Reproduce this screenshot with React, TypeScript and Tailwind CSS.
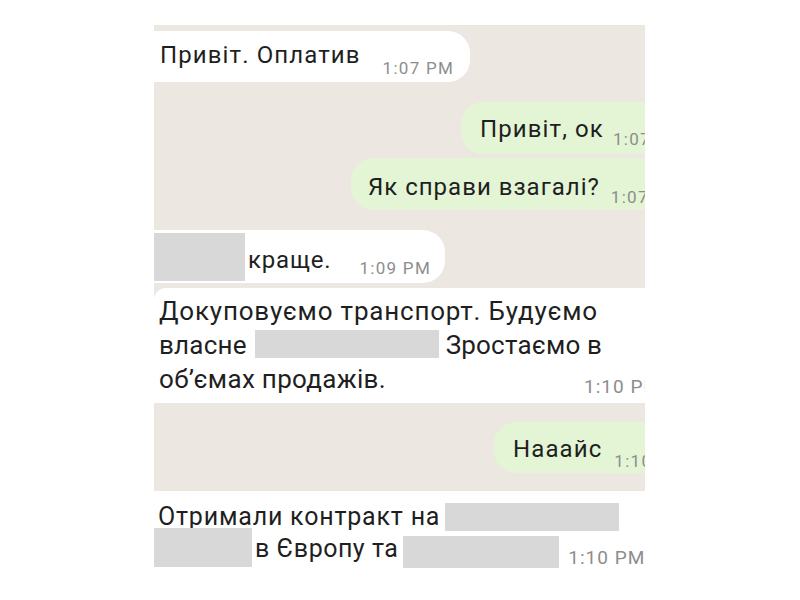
import React from "react";

function Blur({ className = "" }: { className?: string }) {
  return <div className={`shrink-0 bg-[#d8d8d8] ${className}`} />;
}

const ts = "text-[#8d8d8d] whitespace-nowrap shrink-0";

export default function App() {
  return (
    <div className="w-[800px] h-[600px] bg-white pl-[154px] pt-[25px] font-[Roboto,sans-serif] text-[#1f1f1f]">
      <div className="w-[491px] h-[575px] overflow-hidden bg-[#ede7e1] flex flex-col">
        {/* msg 1 */}
        <div className="h-[6px] shrink-0" />
        <div className="w-[316px] h-[51px] shrink-0 bg-white rounded-r-[22px] flex items-start pl-[6px]">
          <div className="pt-[10px] text-[24px] leading-[28px] tracking-[1.1px] whitespace-nowrap">Привіт. Оплатив</div>
          <div className={`pt-[27px] pl-[22px] text-[17px] leading-[20px] tracking-[1.3px] ${ts}`}>1:07 PM</div>
        </div>
        {/* msg 2 */}
        <div className="h-[20px] shrink-0" />
        <div className="self-start w-max ml-[307px] h-[52px] shrink-0 bg-[#e3f5d4] rounded-l-[22px] flex items-start pl-[19px]">
          <div className="pt-[13px] text-[24px] leading-[28px] tracking-[1.1px] whitespace-nowrap">Привіт, ок</div>
          <div className={`pt-[27px] pl-[9px] pr-[12px] text-[17px] leading-[20px] tracking-[1.3px] ${ts}`}>1:07 PM</div>
        </div>
        {/* msg 3 */}
        <div className="h-[4px] shrink-0" />
        <div className="self-start w-max ml-[197px] h-[52px] shrink-0 bg-[#e3f5d4] rounded-l-[22px] flex items-start pl-[17px]">
          <div className="pt-[15px] text-[24px] leading-[28px] tracking-[1px] whitespace-nowrap">Як справи взагалі?</div>
          <div className={`pt-[29px] pl-[11px] pr-[12px] text-[17px] leading-[20px] tracking-[1.3px] ${ts}`}>1:07 PM</div>
        </div>
        {/* msg 4 */}
        <div className="h-[20px] shrink-0" />
        <div className="w-[291px] h-[53px] shrink-0 bg-white rounded-r-[22px] flex items-start">
          <Blur className="w-[91px] h-[48px] mt-[3px]" />
          <div className="pt-[16px] pl-[3px] text-[24px] leading-[28px] tracking-[0.8px] whitespace-nowrap">краще.</div>
          <div className={`pt-[28px] pl-[28px] text-[17px] leading-[20px] tracking-[1.3px] ${ts}`}>1:09 PM</div>
        </div>
        {/* msg 5 */}
        <div className="h-[5px] shrink-0" />
        <div className="h-[115px] shrink-0 bg-white rounded-tl-[12px] flex flex-col pl-[5px] pt-[6px] text-[26px] leading-[34px]">
          <div className="h-[34px] whitespace-nowrap tracking-[0.8px]">Докуповуємо транспорт. Будуємо</div>
          <div className="h-[34px] flex items-start whitespace-nowrap tracking-[0.2px]">
            <span>власне</span>
            <Blur className="w-[184px] h-[28px] ml-[8px] mt-[2px]" />
            <span className="ml-[7px]">Зростаємо в</span>
          </div>
          <div className="h-[34px] flex items-start whitespace-nowrap tracking-[0.3px]">
            <span>об’ємах продажів.</span>
            <span className={`ml-auto mr-[-16px] mt-[15px] text-[19px] leading-[20px] tracking-[1px] ${ts}`}>1:10 PM</span>
          </div>
        </div>
        {/* msg 6 */}
        <div className="h-[19px] shrink-0" />
        <div className="self-start w-max ml-[340px] h-[51px] shrink-0 bg-[#e3f5d4] rounded-l-[22px] flex items-start pl-[19px]">
          <div className="pt-[13px] text-[24px] leading-[28px] tracking-[1.1px] whitespace-nowrap">Нааайс</div>
          <div className={`pt-[29px] pl-[12px] pr-[12px] text-[17px] leading-[20px] tracking-[1.3px] ${ts}`}>1:10 PM</div>
        </div>
        {/* msg 7 */}
        <div className="h-[18px] shrink-0" />
        <div className="flex-1 bg-white flex flex-col pt-[10px] text-[25px] leading-[32px]">
          <div className="h-[32px] flex items-start pl-[4px] whitespace-nowrap tracking-[0.8px]">
            <span>Отримали контракт на</span>
            <Blur className="w-[174px] h-[28px] ml-[5px] mt-[2px]" />
          </div>
          <div className="h-[32px] flex items-start whitespace-nowrap tracking-[0.5px]">
            <Blur className="w-[98px] h-[39px] mt-[-5px]" />
            <span className="pl-[3px]">в Європу та</span>
            <Blur className="w-[156px] h-[32px] ml-[5px] mt-[3px]" />
            <span className={`ml-[9px] mt-[15px] text-[19px] leading-[20px] tracking-[1px] ${ts}`}>1:10 PM</span>
          </div>
        </div>
      </div>
    </div>
  );
}
